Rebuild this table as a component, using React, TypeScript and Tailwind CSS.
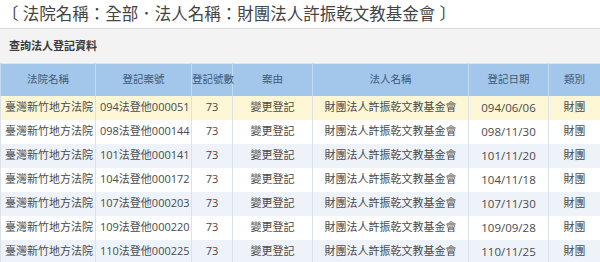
const rows = [
  { no: "094法登他000051", date: "094/06/06" },
  { no: "098法登他000144", date: "098/11/30" },
  { no: "101法登他000141", date: "101/11/20" },
  { no: "104法登他000172", date: "104/11/18" },
  { no: "107法登他000203", date: "107/11/30" },
  { no: "109法登他000220", date: "109/09/28" },
  { no: "110法登他000225", date: "110/11/25" },
];

const rowBg = (i: number) =>
  i === 0 ? "bg-[#fdf7d6]" : i % 2 === 1 ? "bg-white" : "bg-[#eef3f9]";

export default function App() {
  return (
    <div
      className="w-[600px] h-[262px] overflow-hidden bg-white"
      style={{ fontFamily: '"Open Sans", "Noto Sans CJK TC", sans-serif' }}
    >
      <div className="h-[28px] pl-[2px] flex items-center text-[16.5px] leading-none text-[#444] whitespace-pre">
        〔 法院名稱：全部．法人名稱：財團法人許振乾文教基金會 〕
      </div>
      <div className="h-[35px] border-t border-[#dcdcdc] bg-[#f3f3f3] pl-[9px] flex items-center text-[11px] font-bold text-[#3a3a3a]">
        查詢法人登記資料
      </div>
      <table className="w-[600px] table-fixed border-collapse">
        <colgroup>
          <col className="w-[95px]" />
          <col className="w-[96px]" />
          <col className="w-[41px]" />
          <col className="w-[80px]" />
          <col className="w-[156px]" />
          <col className="w-[80px]" />
          <col className="w-[52px]" />
        </colgroup>
        <thead>
          <tr className="h-[32px] bg-[#a3c7ea] border-t border-[#d6e6f6] text-[10.5px] text-[#3d5a78]">
            {["法院名稱", "登記案號", "登記號數", "案由", "法人名稱", "登記日期", "類別"].map((h) => (
              <th
                key={h}
                className="font-normal text-center border-x border-[#c5dbf1] whitespace-nowrap px-0"
              >
                {h}
              </th>
            ))}
          </tr>
        </thead>
        <tbody className="text-[11px] text-[#4a4a4a]">
          {rows.map((r, i) => (
            <tr key={r.no} className={`h-[24px] ${rowBg(i)}`}>
              <td className="border-x border-[#dde2e9] pl-[4px] whitespace-nowrap">臺灣新竹地方法院</td>
              <td className="border-x border-[#dde2e9] pl-[4px] whitespace-nowrap">{r.no}</td>
              <td className="border-x border-[#dde2e9] text-center">73</td>
              <td className="border-x border-[#dde2e9] text-center whitespace-nowrap">變更登記</td>
              <td className="border-x border-[#dde2e9] text-center whitespace-nowrap">財團法人許振乾文教基金會</td>
              <td className="border-x border-[#dde2e9] text-center text-[11.5px]">{r.date}</td>
              <td className="border-x border-[#dde2e9] text-center">財團</td>
            </tr>
          ))}
        </tbody>
      </table>
    </div>
  );
}
